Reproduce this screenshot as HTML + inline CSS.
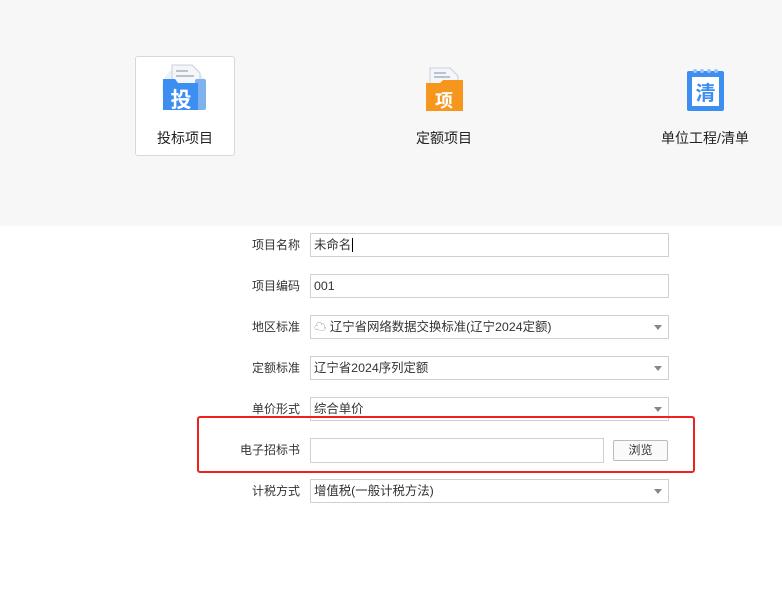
<!DOCTYPE html>
<html><head><meta charset="utf-8"><style>
body{margin:0;width:782px;height:609px;background:#fff;font-family:"Liberation Sans","Noto Sans CJK SC",sans-serif;font-size:12px;color:#333;position:relative;overflow:hidden}
.top{position:absolute;left:0;top:0;width:782px;height:226px;background:#f7f7f7}
.card{position:absolute;left:135px;top:56px;width:98px;height:98px;background:#fff;border:1px solid #d8d8d8;border-radius:3px}
.lbl{position:absolute;top:128px;font-size:14px;color:#222;white-space:nowrap;transform:translateX(-50%)}
.row{position:absolute;left:0;width:782px;height:24px}
.row .l{position:absolute;right:482px;top:3px;white-space:nowrap;color:#333;font-size:12px}
.row .in{position:absolute;left:310px;top:0;height:22px;border:1px solid #d0d0d0;background:#fff;line-height:22px;padding-left:3px;width:354px;font-size:12.4px}
.arr{position:absolute;right:6px;top:9px;width:0;height:0;border-left:4px solid transparent;border-right:4px solid transparent;border-top:5px solid #888}
.red{position:absolute;left:197px;top:416px;width:494px;height:53px;border:2.5px solid #f02020;border-radius:3px}
.btn{position:absolute;left:613px;top:440px;width:53px;height:19px;border:1px solid #bbb;border-radius:2px;background:#fafafa;text-align:center;line-height:19px}
</style></head><body>
<div class="top"></div>
<div class="card"></div>
<svg style="position:absolute;left:160px;top:62px" width="50" height="52" viewBox="0 0 50 52">
<circle cx="24" cy="26" r="22" fill="#eef1f5"/>
<path d="M12 3h20l8 8v35H12z" fill="#f4f6f9" stroke="#c7d0dc"/>
<path d="M16 9h12M16 14h18" stroke="#b8c3d1" stroke-width="2"/>
<rect x="35" y="17" width="11" height="31" rx="2" fill="#7fb1ef"/>
<path d="M3 17h12l3 4h20v27H3z" fill="#3c8ef0"/>
<text x="21" y="45" font-size="21" font-weight="bold" fill="#fff" text-anchor="middle" font-family="Noto Sans CJK SC">投</text>
</svg>
<div class="lbl" style="left:185px">投标项目</div>
<svg style="position:absolute;left:424px;top:67px" width="42" height="46" viewBox="0 0 42 46">
<path d="M6 1h20l8 8v24H6z" fill="#f4f6f9" stroke="#c7d0dc"/>
<path d="M10 6h12M10 10h16" stroke="#b8c3d1" stroke-width="2"/>
<path d="M2 16h14l3 -3h20v31H2z" fill="#f7961c"/>
<text x="20" y="40" font-size="18" font-weight="bold" fill="#fff" text-anchor="middle" font-family="Noto Sans CJK SC">项</text>
</svg>
<div class="lbl" style="left:444px">定额项目</div>
<svg style="position:absolute;left:686px;top:68px" width="40" height="44" viewBox="0 0 40 44">
<rect x="1" y="3" width="37" height="40" rx="2" fill="#3c8ef0"/>
<rect x="6" y="9" width="27" height="29" fill="#fff"/>
<circle cx="9" cy="3" r="2" fill="#9cc4f5"/><circle cx="16" cy="3" r="2" fill="#9cc4f5"/><circle cx="23" cy="3" r="2" fill="#9cc4f5"/><circle cx="30" cy="3" r="2" fill="#9cc4f5"/>
<text x="19.5" y="32" font-size="20" font-weight="bold" fill="#3c8ef0" text-anchor="middle" font-family="Noto Sans CJK SC">清</text>
</svg>
<div class="lbl" style="left:705px">单位工程/清单</div>

<div class="row" style="top:233px"><span class="l">项目名称</span><div class="in">未命名<span style="border-left:1px solid #000;margin-left:1px"></span></div></div>
<div class="row" style="top:274px"><span class="l">项目编码</span><div class="in">001</div></div>
<div class="row" style="top:315px"><span class="l">地区标准</span><div class="in"><span style="color:#888">☁</span> 辽宁省网络数据交换标准(辽宁2024定额)<i class="arr"></i></div></div>
<div class="row" style="top:356px"><span class="l">定额标准</span><div class="in">辽宁省2024序列定额<i class="arr"></i></div></div>
<div class="row" style="top:397px"><span class="l">单价形式</span><div class="in">综合单价<i class="arr"></i></div></div>
<div class="row" style="top:438px"><span class="l">电子招标书</span><div class="in" style="width:289px;height:23px"></div></div>
<div class="btn">浏览</div>
<div class="red"></div>
<div class="row" style="top:479px"><span class="l">计税方式</span><div class="in">增值税(一般计税方法)<i class="arr"></i></div></div>
</body></html>
